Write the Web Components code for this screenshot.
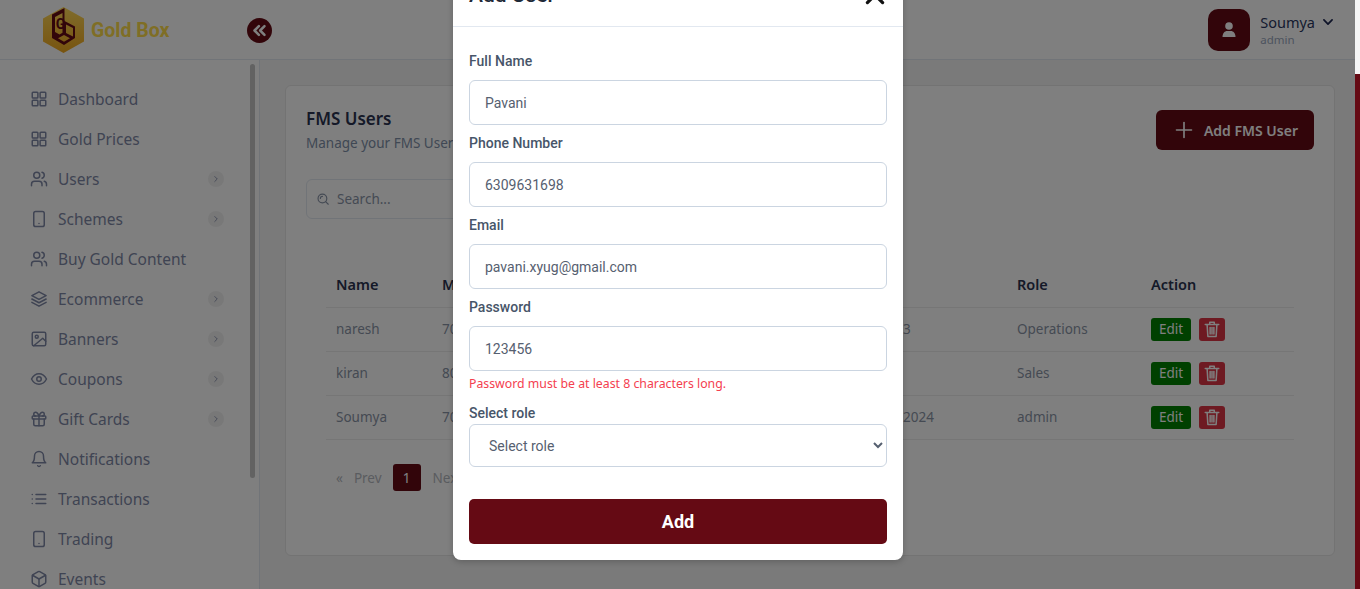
<!DOCTYPE html>
<html lang="en">
<head>
<meta charset="utf-8">
<title>FMS Users</title>
<style>
  html, body { margin:0; height:100%; overflow:hidden; background:#f5f5f5; }
  body { font-family:"Noto Sans", sans-serif; }
</style>
</head>
<body>
<gb-app>
  <gb-header slot="header"></gb-header>
  <gb-sidebar slot="sidebar">
    <gb-nav-item icon="grid">Dashboard</gb-nav-item>
    <gb-nav-item icon="grid">Gold Prices</gb-nav-item>
    <gb-nav-item icon="users" more>Users</gb-nav-item>
    <gb-nav-item icon="tablet" more>Schemes</gb-nav-item>
    <gb-nav-item icon="users">Buy Gold Content</gb-nav-item>
    <gb-nav-item icon="layers" more>Ecommerce</gb-nav-item>
    <gb-nav-item icon="image" more>Banners</gb-nav-item>
    <gb-nav-item icon="eye" more>Coupons</gb-nav-item>
    <gb-nav-item icon="gift" more>Gift Cards</gb-nav-item>
    <gb-nav-item icon="bell">Notifications</gb-nav-item>
    <gb-nav-item icon="list">Transactions</gb-nav-item>
    <gb-nav-item icon="tablet">Trading</gb-nav-item>
    <gb-nav-item icon="box">Events</gb-nav-item>
  </gb-sidebar>
  <fms-users slot="main"></fms-users>
  <user-modal slot="modal" title="Add User">
    <form-field label="Full Name" value="Pavani"></form-field>
    <form-field label="Phone Number" value="6309631698"></form-field>
    <form-field label="Email" value="pavani.xyug@gmail.com"></form-field>
    <form-field label="Password" value="123456" error="Password must be at least 8 characters long."></form-field>
    <role-field label="Select role"></role-field>
  </user-modal>
</gb-app>

<script>
// icon bodies, all drawn on a 24 box with a stroke
const ICONS = {
  grid: '<rect x="3" y="3" width="7.5" height="7.5" rx="1"/><rect x="13.5" y="3" width="7.5" height="7.5" rx="1"/><rect x="3" y="13.5" width="7.5" height="7.5" rx="1"/><rect x="13.5" y="13.5" width="7.5" height="7.5" rx="1"/>',
  users: '<path d="M16 21v-2a4 4 0 0 0-4-4H6a4 4 0 0 0-4 4v2"/><circle cx="9" cy="7" r="4"/><path d="M22 21v-2a4 4 0 0 0-3-3.87"/><path d="M16 3.13a4 4 0 0 1 0 7.75"/>',
  tablet: '<rect x="5" y="2" width="14" height="20" rx="2.5"/><path d="M12 18h.01"/>',
  layers: '<path d="M12 2.5 2.5 7.5 12 12.5l9.5-5z"/><path d="m2.5 12 9.5 5 9.5-5"/><path d="m2.5 16.5 9.5 5 9.5-5"/>',
  image: '<rect x="3" y="3" width="18" height="18" rx="2"/><circle cx="9" cy="9" r="2"/><path d="m21 15-4-4L5 21"/>',
  eye: '<path d="M2 12s3.6-7 10-7 10 7 10 7-3.6 7-10 7-10-7-10-7z"/><circle cx="12" cy="12" r="3"/>',
  gift: '<rect x="3" y="8" width="18" height="4" rx="1"/><path d="M12 8v13"/><path d="M19 12v7a2 2 0 0 1-2 2H7a2 2 0 0 1-2-2v-7"/><path d="M7.5 8a2.5 2.5 0 0 1 0-5C10 3 12 8 12 8s2-5 4.500-5a2.500 2.500 0 0 1 0 5"/>',
  bell: '<path d="M6 8a6 6 0 0 1 12 0c0 7 3 9 3 9H3s3-2 3-9"/><path d="M10.300 21a1.940 1.940 0 0 0 3.400 0"/>',
  list: '<path d="M8 6h13"/><path d="M8 12h13"/><path d="M8 18h13"/><path d="M3 6h.01"/><path d="M3 12h.01"/><path d="M3 18h.01"/>',
  box: '<path d="M21 8a2 2 0 0 0-1-1.730l-7-4a2 2 0 0 0-2 0l-7 4A2 2 0 0 0 3 8v8a2 2 0 0 0 1 1.730l7 4a2 2 0 0 0 2 0l7-4A2 2 0 0 0 21 16z"/><path d="m3.300 7 8.700 5 8.700-5"/><path d="M12 22V12"/>',
  search: '<circle cx="11" cy="11" r="7.500"/><path d="m21 21-4.500-4.500"/><path d="M7.500 11A3.500 3.500 0 0 1 11 7.500"/>',
  plus: '<path d="M12 3v18"/><path d="M3 12h18"/>',
  chevronRight: '<path d="m9 6 6 6-6 6"/>',
  chevronDown: '<path d="m5 8.500 7 7 7-7"/>',
  close: '<path d="M5 5l14 14"/><path d="M19 5 5 19"/>',
  trash: '<path d="M3 6h18"/><path d="M9 5V3h6v2"/><path d="M5.500 6.500 6.500 22h11l1-15.500"/><path d="M9.500 10v8.500"/><path d="M12 10v8.500"/><path d="M14.500 10v8.500"/>'
};

const svgIcon = (name, size, width) =>
  `<svg xmlns="http://www.w3.org/2000/svg" width="${size}" height="${size}" viewBox="0 0 24 24" fill="none" stroke="currentColor" stroke-width="${width}" stroke-linecap="round" stroke-linejoin="round">${ICONS[name]}</svg>`;

// page shell: header, sidebar, main, and the thin strip of the page behind on the right
class GbApp extends HTMLElement {
  connectedCallback() {
    this.attachShadow({ mode: 'open' });
    this.shadowRoot.innerHTML = `
      <style>
        :host { display:flex; height:589px; overflow:hidden; }
        .page {
          position:relative;
          flex:1;
          min-width:0;
          display:grid;
          grid-template-columns:260px 1fr;
          grid-template-rows:60px 1fr;
          background:#f5f5f5;
        }
        .page > slot[name=header] { display:block; grid-column:1 / 3; }
        .backdrop { position:absolute; inset:0; background:rgba(0,0,0,.5); }
        .strip { width:5px; display:flex; flex-direction:column; }
        .strip i { display:block; height:74px; background:#f5f5f5; }
        .strip b { display:block; flex:1; background:#650a14; }
      </style>
      <div class="page">
        <slot name="header"></slot>
        <slot name="sidebar"></slot>
        <slot name="main"></slot>
        <div class="backdrop"></div>
        <slot name="modal"></slot>
      </div>
      <div class="strip"><i></i><b></b></div>
    `;
  }
}

class GbHeader extends HTMLElement {
  connectedCallback() {
    this.attachShadow({ mode: 'open' });
    this.shadowRoot.innerHTML = `
      <style>
        :host {
          display:flex;
          align-items:center;
          justify-content:space-between;
          height:60px;
          box-sizing:border-box;
          padding:0 20px 0 43px;
          background:#fff;
          border-bottom:1px solid #e2e8f0;
          position:relative;
        }
        .logo { display:flex; align-items:center; gap:7px; }
        .logo span {
          margin-top:2px;
          font:700 19.500px/1 Roboto, sans-serif;
          color:#ffdc4a;
        }
        .collapse {
          position:absolute;
          left:247px;
          top:18px;
          width:25px;
          height:25px;
          border-radius:50%;
          background:#650a14;
          color:#fff;
          display:flex;
          align-items:center;
          justify-content:center;
        }
        .user { display:flex; align-items:center; gap:10px; }
        .avatar {
          width:42px;
          height:42px;
          border-radius:10px;
          background:#650a14;
          color:#fff;
          display:flex;
          align-items:center;
          justify-content:center;
        }
        .name {
          display:flex;
          align-items:center;
          gap:6px;
          font-size:14.500px;
          line-height:20px;
          color:#2a3760;
        }
        .name svg { color:#1c2650; }
        .role { font-size:11.500px; line-height:16px; color:#9aa7bd; }
      </style>
      <div class="logo">
        <svg xmlns="http://www.w3.org/2000/svg" width="41" height="46" viewBox="43 7 41 46">
          <defs>
            <linearGradient id="gold" x1="0" y1="0" x2="0" y2="1">
              <stop offset="0" stop-color="#ffd95a"/>
              <stop offset="1" stop-color="#f0a81e"/>
            </linearGradient>
          </defs>
          <path fill="url(#gold)" d="M63.500 7 84 18.500v23L63.500 53 43 41.500v-23z"/>
          <path fill="#650a14" fill-rule="evenodd" d="M52 14.500 64.500 8v13l10.500 5.500v11.500L64 45l-12-7zM55 17v15l4.500 2.500 3-1.800V13zM66 24.500v8.500l7 3.500v-8.500zM58 38.300l6 3.400 6-3.400-6-3.400z"/>
          <text x="55.800" y="29" font-family="Roboto, sans-serif" font-size="14" font-weight="700" fill="#650a14">G</text>
        </svg>
        <span>Gold Box</span>
      </div>
      <div class="collapse">
        <svg xmlns="http://www.w3.org/2000/svg" width="15" height="15" viewBox="0 0 24 24" fill="none" stroke="currentColor" stroke-width="4" stroke-linecap="round" stroke-linejoin="round"><path d="m11 5-7 7 7 7"/><path d="m20 5-7 7 7 7"/></svg>
      </div>
      <div class="user">
        <div class="avatar">
          <svg xmlns="http://www.w3.org/2000/svg" width="16" height="16" viewBox="0 0 16 16" fill="currentColor"><circle cx="8" cy="4" r="3.800"/><path d="M1.500 15c0-4 2.500-6 4.500-6h4c2 0 4.500 2 4.500 6z"/></svg>
        </div>
        <div>
          <div class="name">Soumya ${svgIcon('chevronDown', 14, 3)}</div>
          <div class="role">admin</div>
        </div>
      </div>
    `;
  }
}

class GbSidebar extends HTMLElement {
  connectedCallback() {
    this.attachShadow({ mode: 'open' });
    this.shadowRoot.innerHTML = `
      <style>
        :host {
          display:block;
          position:relative;
          height:529px;
          overflow:hidden;
          box-sizing:border-box;
          background:#fff;
          border-right:1px solid #e2e8f0;
          padding:19px 0 0 30px;
        }
        .thumb {
          position:absolute;
          left:250px;
          top:4px;
          width:5px;
          height:414px;
          border-radius:3px;
          background:#c4c4c4;
        }
      </style>
      <slot></slot>
      <div class="thumb"></div>
    `;
  }
}

class GbNavItem extends HTMLElement {
  connectedCallback() {
    this.attachShadow({ mode: 'open' });
    const more = this.hasAttribute('more');
    this.shadowRoot.innerHTML = `
      <style>
        :host {
          display:flex;
          align-items:center;
          height:40px;
          width:194px;
          font-size:15.500px;
          color:#7f88a6;
        }
        svg { flex:none; }
        .label { margin-left:10px; flex:1; white-space:nowrap; }
        .more {
          width:16px;
          height:16px;
          border-radius:50%;
          background:#f1f1f1;
          color:#7f88a6;
          display:flex;
          align-items:center;
          justify-content:center;
        }
      </style>
      ${svgIcon(this.getAttribute('icon'), 18, 2)}
      <span class="label"><slot></slot></span>
      ${more ? `<span class="more">${svgIcon('chevronRight', 10, 2)}</span>` : ''}
    `;
  }
}

class FmsUsers extends HTMLElement {
  connectedCallback() {
    this.attachShadow({ mode: 'open' });
    const rows = [
      ['naresh', '70', '3', 'Operations'],
      ['kiran', '80', '', 'Sales'],
      ['Soumya', '70', '2024', 'admin']
    ];
    this.shadowRoot.innerHTML = `
      <style>
        :host {
          display:block;
          padding:25px 20px 0 25px;
          background:#f5f5f5;
          min-width:0;
        }
        .card {
          height:471px;
          box-sizing:border-box;
          background:#fff;
          border:1px solid #e6e6e6;
          border-radius:6px;
          padding:20px 20px 0;
        }
        .top { display:flex; justify-content:space-between; align-items:flex-start; height:73px; }
        h1 { margin:0; font-size:17px; line-height:26px; font-weight:600; color:#2a3350; }
        p { margin:0; font-size:13.500px; line-height:22px; color:#8090a8; }
        .add {
          display:flex;
          align-items:center;
          gap:10px;
          height:40px;
          margin:4px 0 0;
          padding:0 16px 0 18px;
          box-sizing:border-box;
          border-radius:6px;
          background:#650a14;
          color:#fff;
          font-size:14px;
          font-weight:600;
        }
        .search {
          display:flex;
          align-items:center;
          gap:7px;
          width:300px;
          height:40px;
          box-sizing:border-box;
          padding-left:9px;
          border:1px solid #e2e8f0;
          border-radius:6px;
          font-size:13.500px;
          color:#8a95a8;
        }
        table { border-collapse:collapse; table-layout:fixed; width:968px; margin:44px 0 0 20px; font-size:13.500px; }
        th { height:42px; padding:0 10px 2px; text-align:left; font-size:14.500px; font-weight:600; color:#2a3350; border-bottom:1px solid #ececec; }
        td { height:41px; padding:0 10px 2px; color:#8a94a6; border-bottom:1px solid #ececec; }
        .acts { display:flex; gap:8px; margin-top:1px; }
        .edit, .del {
          height:23px;
          display:flex;
          align-items:center;
          justify-content:center;
          border-radius:3px;
          color:#fff;
        }
        .edit { width:40px; background:#008000; font-size:13.500px; }
        .del { width:26px; background:#dc3545; }
        .pager {
          display:flex;
          align-items:center;
          height:27px;
          margin:24px 0 0 30px;
          font-size:13.500px;
          color:#b4b8c0;
        }
        .pager .prev { margin-left:11px; }
        .pager .cur {
          width:28px;
          height:27px;
          margin:0 12px 0 11px;
          display:flex;
          align-items:center;
          justify-content:center;
          border-radius:3px;
          background:#650a14;
          color:#fff;
        }
      </style>
      <div class="card">
        <div class="top">
          <div>
            <h1>FMS Users</h1>
            <p>Manage your FMS Users</p>
          </div>
          <div class="add">${svgIcon('plus', 20, 2)}<span>Add FMS User</span></div>
        </div>
        <div class="search">${svgIcon('search', 14, 2)}<span>Search...</span></div>
        <table>
          <colgroup><col style="width:106px"><col style="width:461px"><col style="width:114px"><col style="width:134px"><col style="width:153px"></colgroup>
          <thead><tr><th>Name</th><th>Mobile</th><th></th><th>Role</th><th>Action</th></tr></thead>
          <tbody>
            ${rows.map(r => `
              <tr>
                <td>${r[0]}</td><td>${r[1]}</td><td>${r[2]}</td><td>${r[3]}</td>
                <td><div class="acts"><span class="edit">Edit</span><span class="del">${svgIcon('trash', 18, 2)}</span></div></td>
              </tr>`).join('')}
          </tbody>
        </table>
        <div class="pager"><span>«</span><span class="prev">Prev</span><span class="cur">1</span><span>Next</span></div>
      </div>
    `;
  }
}

class UserModal extends HTMLElement {
  connectedCallback() {
    this.attachShadow({ mode: 'open' });
    this.shadowRoot.innerHTML = `
      <style>
        :host {
          display:block;
          position:absolute;
          left:453px;
          top:-36px;
          width:450px;
          background:#fff;
          border-radius:8px;
          box-shadow:0 2px 6px rgba(0,0,0,.2);
          font-family:Roboto, sans-serif;
        }
        header {
          display:flex;
          align-items:center;
          justify-content:space-between;
          height:62px;
          padding:0 16px;
          border-bottom:1px solid #e2e8f0;
          color:#1f2937;
          font-size:21px;
          font-weight:500;
          line-height:30px;
        }
        svg { color:#111; margin-right:-1px; }
        .body { padding:24px 16px 16px; }
        .submit {
          height:45px;
          margin-top:32px;
          display:flex;
          align-items:center;
          justify-content:center;
          border-radius:5px;
          background:#650a14;
          color:#fff;
          font-size:18px;
          font-weight:700;
        }
      </style>
      <header><span>${this.getAttribute('title')}</span>${svgIcon('close', 26, 3)}</header>
      <div class="body">
        <slot></slot>
        <div class="submit">Add</div>
      </div>
    `;
  }
}

const FIELD_CSS = `
  :host { display:block; margin-bottom:8px; }
  label { display:block; height:21px; margin-bottom:8px; font:500 14px/21px Roboto, sans-serif; color:#475569; }
  input, select {
    display:block;
    width:100%;
    box-sizing:border-box;
    border:1px solid #cbd5e1;
    border-radius:6px;
    background:#fff;
    font:400 14px Roboto, sans-serif;
    color:#566070;
    outline:none;
  }
  input { height:45px; padding:0 15px; }
  .err { margin:4px 0 10px; font:400 12.300px/18px "Noto Sans", sans-serif; color:#f4404f; }
`;

class FormField extends HTMLElement {
  connectedCallback() {
    this.attachShadow({ mode: 'open' });
    const error = this.getAttribute('error');
    this.shadowRoot.innerHTML = `
      <style>${FIELD_CSS}</style>
      <label>${this.getAttribute('label')}</label>
      <input type="text" value="${this.getAttribute('value')}">
      ${error ? `<div class="err">${error}</div>` : ''}
    `;
  }
}

class RoleField extends HTMLElement {
  connectedCallback() {
    this.attachShadow({ mode: 'open' });
    this.shadowRoot.innerHTML = `
      <style>
        ${FIELD_CSS}
        :host { margin:0; }
        label { margin:0; }
        select { height:43px; padding:0 0 0 15px; }
      </style>
      <label>${this.getAttribute('label')}</label>
      <select><option>${this.getAttribute('label')}</option></select>
    `;
  }
}

customElements.define('gb-app', GbApp);
customElements.define('gb-header', GbHeader);
customElements.define('gb-sidebar', GbSidebar);
customElements.define('gb-nav-item', GbNavItem);
customElements.define('fms-users', FmsUsers);
customElements.define('user-modal', UserModal);
customElements.define('form-field', FormField);
customElements.define('role-field', RoleField);
</script>
</body>
</html>
